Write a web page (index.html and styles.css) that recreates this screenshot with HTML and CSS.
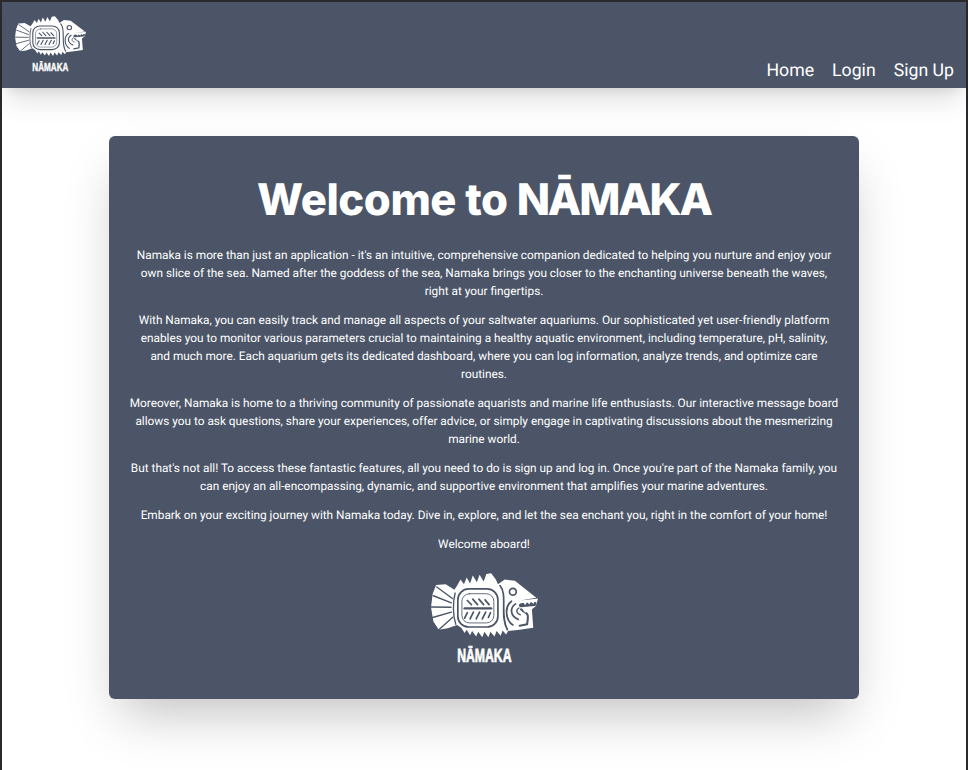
FILE: index.html
```html
<!DOCTYPE html>
<html lang="en">
<head>
<meta charset="utf-8">
<title>Namaka</title>
<link rel="stylesheet" href="styles.css">
</head>
<body>
<svg class="defs" width="0" height="0" aria-hidden="true">
  <symbol id="namaka" viewBox="35 25 315 265" preserveAspectRatio="none">
    <path fill="#fff" d="M50 60 78 58 104 74 112 62 122 44 132 58 140 38 150 56 158 32 170 52 178 30 190 50 198 28 212 26 226 44 232 58 252 44 282 48 345 98 298 106 350 100 344 122 332 132 336 186 296 192 262 196 256 206 246 194 240 210 228 196 222 212 210 198 204 214 192 198 186 214 174 198 168 212 156 196 150 208 140 192 134 202 124 186 112 178 84 188 58 192 42 168 35 126 40 86Z"/>
    <g fill="none" stroke="#4b5567" stroke-linecap="round" stroke-linejoin="round">
      <path stroke-width="4" d="M98 100 52 66M95 113 42 92M94 126 34 125M95 140 40 156M99 155 58 192"/>
      <path stroke-width="4" d="M106 84C99 112 99 150 108 176"/>
      <rect x="114" y="72" width="118" height="112" rx="32" stroke-width="5"/>
      <path stroke-width="7" d="M134 129H212"/>
      <rect x="126" y="86" width="94" height="86" rx="22" stroke-width="2.5"/>
      <path stroke-width="5" d="M142 106 154 118M158 102 172 118M176 102 190 118M194 104 206 118M142 142 134 158M160 140 150 160M178 140 168 160M196 140 186 160M210 142 204 156"/>
      <circle cx="276" cy="80" r="10" stroke-width="5"/>
      <path stroke-width="5" d="M238 62C262 90 236 150 260 192"/>
      <path stroke-width="5" d="M272 108C252 122 252 162 276 178"/>
      <path stroke-width="5" d="M284 116C266 128 268 152 292 162"/>
      <path stroke-width="4" d="M294 128C284 134 286 144 298 148"/>
      <path stroke-width="12" d="M300 120 340 116"/>
      <path stroke-width="6" d="M300 132C314 146 322 140 320 160L318 176 296 180"/>
    </g>
    <path fill="#fff" d="M306 110 312 120 318 110 324 118 330 108 336 116 342 106 298 108ZM306 134 312 124 318 132 324 124 332 128 312 142Z"/>
    <text x="192" y="287" text-anchor="middle" textLength="160" lengthAdjust="spacingAndGlyphs" class="logo-text">NĀMAKA</text>
  </symbol>
</svg>
<div class="frame">
  <header class="topbar">
    <a class="brand" href="#"><svg class="logo logo-small" role="img" aria-label="Namaka"><use href="#namaka"/></svg></a>
    <nav class="nav">
      <a href="#">Home</a>
      <a href="#">Login</a>
      <a href="#">Sign Up</a>
    </nav>
  </header>
  <main class="content">
    <section class="card">
      <h1>Welcome to <span class="brand-word">NĀMAKA</span></h1>
      <p>Namaka is more than just an application - it's an intuitive, comprehensive companion dedicated to helping you nurture and enjoy your own slice of the sea. Named after the goddess of the sea, Namaka brings you closer to the enchanting universe beneath the waves, right at your fingertips.</p>
      <p>With Namaka, you can easily track and manage all aspects of your saltwater aquariums. Our sophisticated yet user-friendly platform enables you to monitor various parameters crucial to maintaining a healthy aquatic environment, including temperature, pH, salinity, and much more. Each aquarium gets its dedicated dashboard, where you can log information, analyze trends, and optimize care routines.</p>
      <p>Moreover, Namaka is home to a thriving community of passionate aquarists and marine life enthusiasts. Our interactive message board allows you to ask questions, share your experiences, offer advice, or simply engage in captivating discussions about the mesmerizing marine world.</p>
      <p>But that's not all! To access these fantastic features, all you need to do is sign up and log in. Once you're part of the Namaka family, you can enjoy an all-encompassing, dynamic, and supportive environment that amplifies your marine adventures.</p>
      <p>Embark on your exciting journey with Namaka today. Dive in, explore, and let the sea enchant you, right in the comfort of your home!</p>
      <p>Welcome aboard!</p>
      <svg class="logo logo-large" role="img" aria-label="Namaka"><use href="#namaka"/></svg>
    </section>
  </main>
</div>
</body>
</html>
```
FILE: styles.css
```css
* { box-sizing: border-box; }
html, body { margin: 0; padding: 0; }
body { font-family: Roboto, "Liberation Sans", sans-serif; background: #fff; color: #fff; overflow: hidden; text-rendering: geometricPrecision; }
.defs { position: absolute; }
.frame { height: 770px; border: 2px solid #2a2a2c; border-bottom: 0; background: #fff; }
.topbar { height: 86px; background: #4b5567; display: flex; justify-content: space-between; align-items: flex-end; padding: 0 12px 3px 13px; box-shadow: 0 20px 25px -5px rgba(0,0,0,.1), 0 8px 10px -6px rgba(0,0,0,.1); position: relative; }
.brand { display: block; align-self: flex-start; margin-top: 14px; }
.logo { display: block; }
.logo-small { width: 71px; height: 56px; }
.logo-large { width: 107px; height: 90px; margin: 20px auto 0; }
.logo-text { font-family: "Liberation Sans Narrow", "Liberation Sans", sans-serif; font-weight: 700; font-size: 56px; fill: #fff; stroke: #fff; stroke-width: 2px; }
.nav { display: flex; gap: 18px; font-size: 17.7px; line-height: 28px; }
.nav a { color: #fff; text-decoration: none; }
.content { display: flex; justify-content: center; padding-top: 48px; }
.card { width: 750px; height: 563px; background: #4b5567; border-radius: 6px; padding: 34px 20.7px 0; text-align: center; box-shadow: 0 25px 50px -12px rgba(0,0,0,.25); }
h1 { margin: 0 0 16px; font-family: Inter, Roboto, sans-serif; font-size: 43.6px; line-height: 60px; font-weight: 800; letter-spacing: -.01em; }
.brand-word { letter-spacing: -.05em; }
p { margin: 0 0 11px; font-size: 11.83px; line-height: 18px; }
```
